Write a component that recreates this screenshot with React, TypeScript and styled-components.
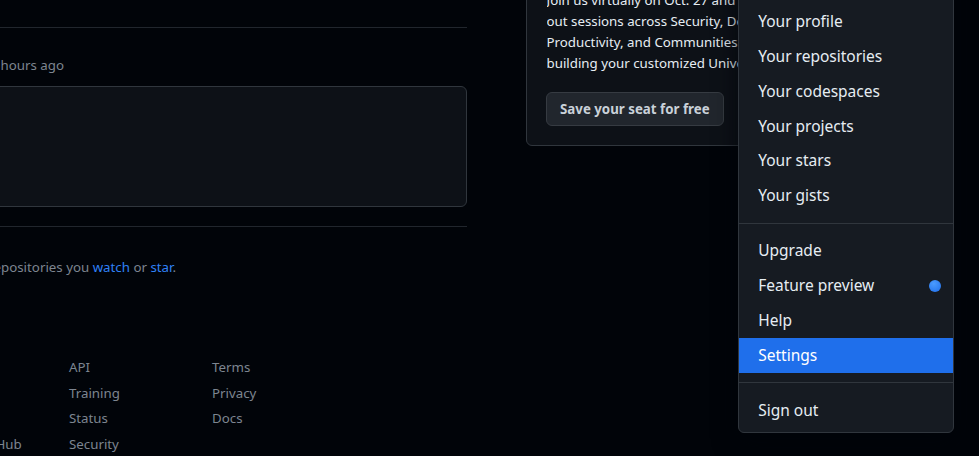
import styled, { createGlobalStyle } from "styled-components"

const GlobalStyle = createGlobalStyle`
  html, body {
    margin: 0;
    background: #010409;
    overflow: hidden;
  }
  body {
    font-family: "Noto Sans", "Liberation Sans", sans-serif;
    color: #e6edf3;
  }
  a {
    text-decoration: none;
    color: inherit;
  }
`

const Page = styled.div`
  position: relative;
  height: 456px;
  display: flex;
  align-items: flex-start;
  gap: 59px;
`

// the page is scrolled right and down, so the feed starts left of the window
const Feed = styled.main`
  flex-shrink: 0;
  width: 541px;
  margin-left: -74px;
  padding-top: 27px;
`

const FeedItem = styled.article`
  border-top: 1px solid #21262d;
  padding: 26px 0 19px;
`

// right-anchored so the clipped start runs off the left edge
const Clipped = styled.div<{ $end: number }>`
  display: flex;
  justify-content: flex-end;
  width: ${(p) => p.$end}px;
  white-space: nowrap;
`

const Meta = styled.div`
  font-size: 13.3px;
  line-height: 22px;
  color: #7d8590;
`

const FeedBox = styled.div`
  box-sizing: border-box;
  height: 121px;
  margin-top: 10px;
  background: #0d1117;
  border: 1px solid #30363d;
  border-radius: 6px;
`

const FeedEnd = styled.section`
  border-top: 1px solid #21262d;
  padding-top: 29px;
  font-size: 13.3px;
  line-height: 22px;
  color: #7d8590;
`

const Link = styled.a`
  color: #2f81f7;
`

const Footer = styled.footer`
  display: grid;
  grid-template-columns: repeat(3, 143px);
  grid-template-rows: repeat(4, 25.6px);
  grid-auto-flow: column;
  margin-top: 77px;
  font-size: 13.3px;
  line-height: 25.6px;
  color: #7d8590;
`

const FooterLink = styled.a`
  white-space: nowrap;
`

const Aside = styled.aside`
  flex-shrink: 0;
  width: 360px;
  margin-top: -30px;
`

const Card = styled.div`
  background: #0d1117;
  border: 1px solid #30363d;
  border-radius: 6px;
  padding: 19px 19px 19px 19.5px;
`

const CardText = styled.p`
  margin: 0;
  font-size: 13.3px;
  line-height: 21px;
  color: #e6edf3;
  white-space: nowrap;
  overflow: hidden;
`

const Button = styled.button`
  box-sizing: border-box;
  height: 34px;
  margin-top: 18px;
  margin-left: -0.5px;
  padding: 0 13px;
  font-family: inherit;
  font-size: 13.3px;
  font-weight: 700;
  color: #c9d1d9;
  background: #21262d;
  border: 1px solid #363b42;
  border-radius: 6px;
`

const Menu = styled.nav`
  position: absolute;
  top: -62.5px;
  right: 25px;
  box-sizing: border-box;
  width: 216px;
  padding: 4.8px 0;
  background: #161b22;
  border: 1px solid #30363d;
  border-radius: 6px;
  box-shadow: 0 8px 24px rgba(1, 4, 9, 0.75);
`

const MenuHeader = styled.div`
  box-sizing: border-box;
  height: 41px;
  padding: 9.6px 19.2px;
  font-size: 13.3px;
  line-height: 21.6px;
  color: #7d8590;
  strong {
    color: #e6edf3;
  }
`

const Divider = styled.div`
  height: 1px;
  margin: 9.6px 0;
  background: #30363d;
`

const MenuItem = styled.a<{ $active?: boolean }>`
  display: flex;
  align-items: center;
  justify-content: space-between;
  padding: 4.8px 12px 4.8px 19.2px;
  font-size: 15.5px;
  line-height: 25.2px;
  color: ${(p) => (p.$active ? "#ffffff" : "#e6edf3")};
  background: ${(p) => (p.$active ? "#1f6feb" : "transparent")};
`

const Dot = styled.span`
  width: 12px;
  height: 12px;
  border-radius: 50%;
  background: radial-gradient(circle at 40% 30%, #4a9bff, #1f6feb);
`

const profileItems = [
  "Your profile",
  "Your repositories",
  "Your codespaces",
  "Your projects",
  "Your stars",
  "Your gists",
]

const footerLinks = [
  "Blog", "About", "Shop", "Contact GitHub",
  "API", "Training", "Status", "Security",
  "Terms", "Privacy", "Docs",
]

export default function App() {
  return (
    <>
      <GlobalStyle />
      <Page>
        <Feed>
          <FeedItem>
            <Meta>
              <Clipped $end={138}>
                <span>octocat starred github/docs · 2 hours ago</span>
              </Clipped>
            </Meta>
            <FeedBox />
          </FeedItem>
          <FeedEnd>
            <Clipped $end={250}>
              <span>
                Subscribe to your news feed to see updates from people you follow and
                repositories you <Link href="#">watch</Link> or{" "}
                <Link href="#">star</Link>.
              </span>
            </Clipped>
          </FeedEnd>
          <Footer>
            {footerLinks.map((l) => (
              <FooterLink key={l} href="#">
                {l}
              </FooterLink>
            ))}
          </Footer>
        </Feed>
        <Aside>
          <Card>
            <CardText>
              Join us virtually on Oct. 27 and 28 for demos and break-
              <br />
              out sessions across Security, DevOps, Developer
              <br />
              Productivity, and Communities — and start
              <br />
              building your customized Universe experience.
            </CardText>
            <Button>Save your seat for free</Button>
          </Card>
        </Aside>
        <Menu>
          <MenuHeader>
            Signed in as <strong>octocat</strong>
          </MenuHeader>
          <Divider />
          {profileItems.map((i) => (
            <MenuItem key={i} href="#">
              {i}
            </MenuItem>
          ))}
          <Divider />
          <MenuItem href="#">Upgrade</MenuItem>
          <MenuItem href="#">
            Feature preview
            <Dot />
          </MenuItem>
          <MenuItem href="#">Help</MenuItem>
          <MenuItem href="#" $active>
            Settings
          </MenuItem>
          <Divider />
          <MenuItem href="#">Sign out</MenuItem>
        </Menu>
      </Page>
    </>
  )
}
